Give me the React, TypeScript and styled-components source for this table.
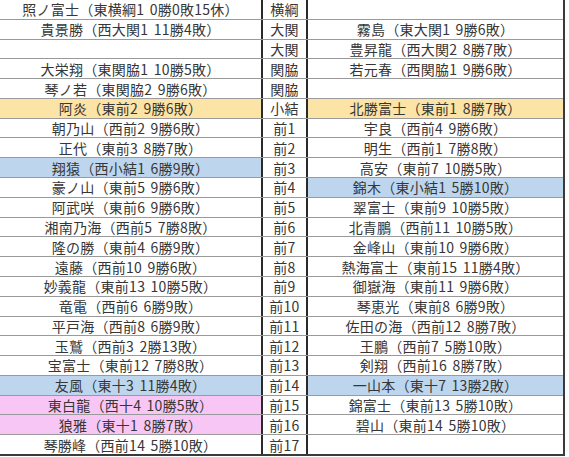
import React from "react";
import styled, { createGlobalStyle } from "styled-components";

type Tone = "none" | "yellow" | "blue" | "pink";

interface Row {
  rank: string;
  east: string;
  eastTone?: Tone;
  west: string;
  westTone?: Tone;
}

const rows: Row[] = [
  { rank: "横綱", east: "照ノ富士（東横綱1 0勝0敗15休）", west: "" },
  { rank: "大関", east: "貴景勝（西大関1 11勝4敗）", west: "霧島（東大関1 9勝6敗）" },
  { rank: "大関", east: "", west: "豊昇龍（西大関2 8勝7敗）" },
  { rank: "関脇", east: "大栄翔（東関脇1 10勝5敗）", west: "若元春（西関脇1 9勝6敗）" },
  { rank: "関脇", east: "琴ノ若（東関脇2 9勝6敗）", west: "" },
  { rank: "小結", east: "阿炎（東前2 9勝6敗）", eastTone: "yellow", west: "北勝富士（東前1 8勝7敗）", westTone: "yellow" },
  { rank: "前1", east: "朝乃山（西前2 9勝6敗）", west: "宇良（西前4 9勝6敗）" },
  { rank: "前2", east: "正代（東前3 8勝7敗）", west: "明生（西前1 7勝8敗）" },
  { rank: "前3", east: "翔猿（西小結1 6勝9敗）", eastTone: "blue", west: "高安（東前7 10勝5敗）" },
  { rank: "前4", east: "豪ノ山（東前5 9勝6敗）", west: "錦木（東小結1 5勝10敗）", westTone: "blue" },
  { rank: "前5", east: "阿武咲（東前6 9勝6敗）", west: "翠富士（東前9 10勝5敗）" },
  { rank: "前6", east: "湘南乃海（西前5 7勝8敗）", west: "北青鵬（西前11 10勝5敗）" },
  { rank: "前7", east: "隆の勝（東前4 6勝9敗）", west: "金峰山（東前10 9勝6敗）" },
  { rank: "前8", east: "遠藤（西前10 9勝6敗）", west: "熱海富士（東前15 11勝4敗）" },
  { rank: "前9", east: "妙義龍（東前13 10勝5敗）", west: "御嶽海（東前11 9勝6敗）" },
  { rank: "前10", east: "竜電（西前6 6勝9敗）", west: "琴恵光（東前8 6勝9敗）" },
  { rank: "前11", east: "平戸海（西前8 6勝9敗）", west: "佐田の海（西前12 8勝7敗）" },
  { rank: "前12", east: "玉鷲（西前3 2勝13敗）", west: "王鵬（西前7 5勝10敗）" },
  { rank: "前13", east: "宝富士（東前12 7勝8敗）", west: "剣翔（西前16 8勝7敗）" },
  { rank: "前14", east: "友風（東十3 11勝4敗）", eastTone: "blue", west: "一山本（東十7 13勝2敗）", westTone: "blue" },
  { rank: "前15", east: "東白龍（西十4 10勝5敗）", eastTone: "pink", west: "錦富士（東前13 5勝10敗）" },
  { rank: "前16", east: "狼雅（東十1 8勝7敗）", eastTone: "pink", west: "碧山（東前14 5勝10敗）" },
  { rank: "前17", east: "琴勝峰（西前14 5勝10敗）", west: "" },
];

const toneColors: Record<Tone, string> = {
  none: "#ffffff",
  yellow: "#fce3a6",
  blue: "#bdd6ee",
  pink: "#f8c6f4",
};

export default function App() {
  return (
    <>
      <GlobalStyle />
      <Page>
        <Banzuke>
          {rows.map((row, i) => (
            <RankRow key={i} last={i === rows.length - 1}>
              <NameCell tone={row.eastTone ?? "none"}>{row.east}</NameCell>
              <RankCell>{row.rank}</RankCell>
              <NameCell tone={row.westTone ?? "none"}>{row.west}</NameCell>
            </RankRow>
          ))}
        </Banzuke>
      </Page>
    </>
  );
}

const GlobalStyle = createGlobalStyle`
  html, body {
    margin: 0;
    padding: 0;
    background: #ffffff;
  }
  body {
    font-family: "Noto Sans CJK JP", "Noto Sans", sans-serif;
    color: #363636;
  }
`;

const Page = styled.div`
  width: 569px;
  height: 457px;
  overflow: hidden;
  background: #ffffff;
`;

const Banzuke = styled.div`
  width: 565px;
  display: flex;
  flex-direction: column;
  border-right: 2px solid #3a3a3a;
  box-sizing: border-box;
`;

const RankRow = styled.div.withConfig({
  shouldForwardProp: (prop) => prop !== "last",
})<{ last?: boolean }>`
  display: grid;
  grid-template-columns: 261px 47px 1fr;
  height: ${(p) => (p.last ? "calc(455px / 23 + 1px)" : "calc(455px / 23)")};
  box-sizing: border-box;
  border-bottom: ${(p) => (p.last ? "2px solid #3a3a3a" : "1px solid #9a9a9a")};
`;

const NameCell = styled.div.withConfig({
  shouldForwardProp: (prop) => prop !== "tone",
})<{ tone: Tone }>`
  display: flex;
  align-items: center;
  justify-content: center;
  background: ${(p) => toneColors[p.tone]};
  font-size: 14px;
  letter-spacing: 0.25px;
  word-spacing: 2px;
  line-height: 1;
  white-space: nowrap;
  overflow: hidden;
`;

const RankCell = styled.div`
  display: flex;
  align-items: center;
  justify-content: center;
  background: #ffffff;
  border-left: 2px solid #2a2a2a;
  border-right: 2px solid #2a2a2a;
  font-size: 14px;
  letter-spacing: 0.25px;
  line-height: 1;
`;
